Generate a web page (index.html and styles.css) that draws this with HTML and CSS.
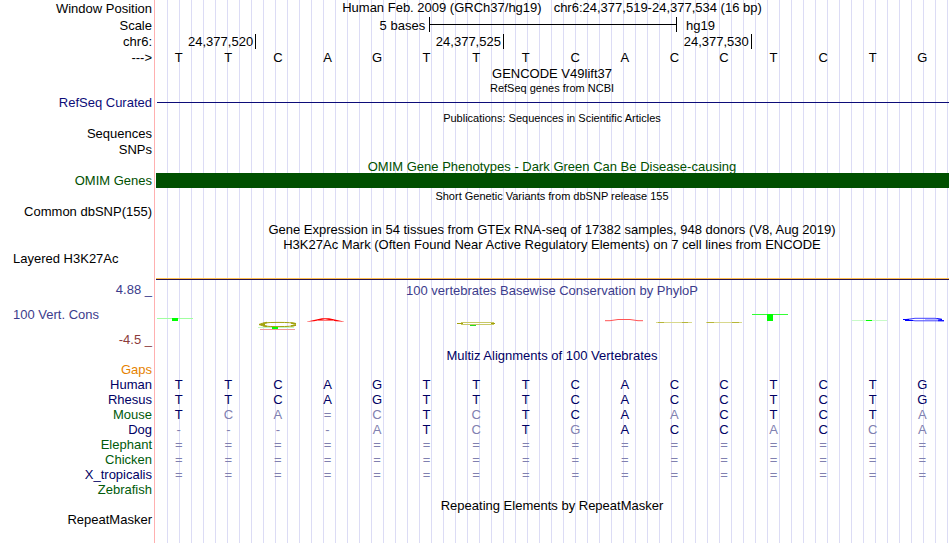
FILE: index.html
```
<!DOCTYPE html>
<html lang="en">
<head>
<meta charset="utf-8">
<title>Human chr6:24,377,519-24,377,534 genome browser</title>
<link rel="stylesheet" href="styles.css">
</head>
<body>
<main class="browser">
  <div class="row tall"><div class="label">Window Position</div><div class="title position"><span>Human Feb. 2009 (GRCh37/hg19)</span><span>chr6:24,377,519-24,377,534 (16 bp)</span></div></div>
  <div class="row tall"><div class="label">Scale</div><div class="scale"><span class="scale-size">5 bases</span><span class="scale-bar"></span><span class="scale-db">hg19</span></div></div>
  <div class="row medium"><div class="label">chr6:</div><div class="ruler"><span class="tick">24,377,520</span><span class="tick">24,377,525</span><span class="tick">24,377,530</span></div></div>
  <div class="row"><div class="label">---&gt;</div><div class="bases"><span>T</span><span>T</span><span>C</span><span>A</span><span>G</span><span>T</span><span>T</span><span>T</span><span>C</span><span>A</span><span>C</span><span>C</span><span>T</span><span>C</span><span>T</span><span>G</span></div></div>
  <div class="row"><div class="title">GENCODE V49lift37</div></div>
  <div class="row"><div class="title small">RefSeq genes from NCBI</div></div>
  <div class="row refseq"><div class="label">RefSeq Curated</div><div class="gene-line"></div></div>
  <div class="row medium"><div class="title small">Publications: Sequences in Scientific Articles</div></div>
  <div class="row"><div class="label">Sequences</div></div>
  <div class="row tall"><div class="label">SNPs</div></div>
  <div class="row green"><div class="title">OMIM Gene Phenotypes - Dark Green Can Be Disease-causing</div></div>
  <div class="row green"><div class="label">OMIM Genes</div><div class="gene-bar"></div></div>
  <div class="row medium"><div class="title small">Short Genetic Variants from dbSNP release 155</div></div>
  <div class="row"><div class="label">Common dbSNP(155)</div></div>
  <div class="row after-gap"><div class="title">Gene Expression in 54 tissues from GTEx RNA-seq of 17382 samples, 948 donors (V8, Aug 2019)</div></div>
  <div class="row"><div class="title">H3K27Ac Mark (Often Found Near Active Regulatory Elements) on 7 cell lines from ENCODE</div></div>
  <div class="row signal"><div class="label left">Layered H3K27Ac</div><div class="signal-line"></div></div>
  <div class="row slate"><div class="label">4.88 _</div><div class="title">100 vertebrates Basewise Conservation by PhyloP</div></div>
  <div class="row slate conservation">
    <div class="label range"><span class="range-name">100 Vert. Cons</span><span class="brown">-4.5 _</span></div>
    <svg class="logo" viewBox="154 297 796 50" preserveAspectRatio="none" aria-hidden="true">
      <path d="M157 318h36v1h-36z" fill="#a0ffa0"/><path d="M172 318h6v3h-6z" fill="#0f0"/>
      <g fill="none" stroke="#a2a20c">
        <path d="M296 323.5Q292 322.4 278 322.4Q260 322.4 260 324.5Q260 326.6 278 326.6Q292 326.6 296 325.3"/>
        <path d="M259 324.5h6M263 323.5l4-1M263 325.5l4 1M291 323l5 1M291 326l5-1" stroke-width="1.5"/>
      </g>
      <path d="M258 327h36v1h-36z" fill="#c4f6c4"/><path d="M272 327h6v2h-6z" fill="#0f0"/><path d="M260 329h35v1h-35z" fill="#e99"/>
      <path d="M306 321.7L322 318.2h7L345 321.7L336 321.2L325 319.2L314 321.3z" fill="red"/><path d="M317 320.5h17" stroke="#f77"/>
      <path d="M461 322h33v1h-33zM461 324h33v1h-33z" fill="#c8c866"/><path d="M457 323h6v1h-6zM491 323h4v1h-4z" fill="#a2a20c"/><path d="M470 325h6v1h-6z" fill="#2d2"/>
      <path d="M605 320.7h5l8-1.2h12l8 1.2h5" fill="none" stroke="#f55"/>
      <path d="M656 322h36v1h-36zM706 322h36v1h-36z" fill="#d8d88c"/><path d="M658 322h6v1h-6zM682 322h6v1h-6zM707 322h7v1h-7zM732 322h7v1h-7z" fill="#b6b638"/>
      <path d="M752 314h36v1h-36z" fill="#3f3"/><path d="M767 314h6v7h-6z" fill="#0f0"/>
      <path d="M852 320h35v1h-35z" fill="#c8fac8"/><path d="M866 320h6v1h-6z" fill="#0f0"/>
      <g fill="none" stroke="#44f"><path d="M942 319.2l-7-.9h-20l-9 1.2l9 1.3h29"/><path d="M903 319.5h6M905 320.5h8M937 318.8l5 .8M938 320.7h6" stroke="#00f"/><path d="M925 319.5h13" stroke="#bbf"/></g>
    </svg>
  </div>
  <div class="row navy"><div class="title">Multiz Alignments of 100 Vertebrates</div></div>
  <div class="row orange"><div class="label">Gaps</div></div>
  <table class="alignment">
    <colgroup><col class="species"><col span="16"></colgroup>
    <tbody>
    <tr><th scope="row">Human</th><td>T</td><td>T</td><td>C</td><td>A</td><td>G</td><td>T</td><td>T</td><td>T</td><td>C</td><td>A</td><td>C</td><td>C</td><td>T</td><td>C</td><td>T</td><td>G</td></tr>
    <tr><th scope="row">Rhesus</th><td>T</td><td>T</td><td>C</td><td>A</td><td>G</td><td>T</td><td>T</td><td>T</td><td>C</td><td>A</td><td>C</td><td>C</td><td>T</td><td>C</td><td>T</td><td>G</td></tr>
    <tr><th scope="row" class="distant">Mouse</th><td>T</td><td class="diff">C</td><td class="diff">A</td><td class="diff">=</td><td class="diff">C</td><td>T</td><td class="diff">C</td><td>T</td><td>C</td><td>A</td><td class="diff">A</td><td>C</td><td>T</td><td>C</td><td>T</td><td class="diff">A</td></tr>
    <tr><th scope="row">Dog</th><td class="diff">-</td><td class="diff">-</td><td class="diff">-</td><td class="diff">-</td><td class="diff">A</td><td>T</td><td class="diff">C</td><td>T</td><td class="diff">G</td><td>A</td><td>C</td><td>C</td><td class="diff">A</td><td>C</td><td class="diff">C</td><td class="diff">A</td></tr>
    <tr class="unaligned"><th scope="row" class="distant">Elephant</th><td>=</td><td>=</td><td>=</td><td>=</td><td>=</td><td>=</td><td>=</td><td>=</td><td>=</td><td>=</td><td>=</td><td>=</td><td>=</td><td>=</td><td>=</td><td>=</td></tr>
    <tr class="unaligned"><th scope="row" class="distant">Chicken</th><td>=</td><td>=</td><td>=</td><td>=</td><td>=</td><td>=</td><td>=</td><td>=</td><td>=</td><td>=</td><td>=</td><td>=</td><td>=</td><td>=</td><td>=</td><td>=</td></tr>
    <tr class="unaligned"><th scope="row">X_tropicalis</th><td>=</td><td>=</td><td>=</td><td>=</td><td>=</td><td>=</td><td>=</td><td>=</td><td>=</td><td>=</td><td>=</td><td>=</td><td>=</td><td>=</td><td>=</td><td>=</td></tr>
    <tr><th scope="row" class="distant">Zebrafish</th><td colspan="16"></td></tr>
    </tbody>
  </table>
  <div class="row"><div class="title">Repeating Elements by RepeatMasker</div></div>
  <div class="row"><div class="label">RepeatMasker</div></div>
</main>
</body>
</html>
```
FILE: styles.css
```
:root {
  --label-width: 154px;
  --navy: #000064;
  --green: #005000;
}

* {
  box-sizing: border-box;
}

body {
  margin: 0;
  background: #fff;
  color: #000;
  font: 13px/15px "Liberation Sans", Arial, sans-serif;
}

/* Label gutter, its red divider and the vertical guidelines */
.browser {
  min-height: 100vh;
  background:
    linear-gradient(to right, #fff 154px, #ffb0b0 154px, #ffb0b0 155px, #fff 155px, #fff 158px, transparent 158px),
    linear-gradient(to right, #dcdcf5 1px, transparent 1px) 11px 0 / 12px 100%;
}

.row {
  display: grid;
  grid-template-columns: var(--label-width) minmax(0, 1fr);
  grid-template-rows: 15px;
  white-space: nowrap;
}

.medium { grid-template-rows: 16px; line-height: 16px; }
.tall { grid-template-rows: 17px; line-height: 17px; }
.after-gap { margin-top: 2px; }

.label {
  padding-right: 2px;
  text-align: right;
}

.label.left {
  padding-left: 13px;
  text-align: left;
}

.title {
  grid-column: 2;
  line-height: 17px;
  text-align: center;
}

.small { font-size: 11px; }

.position {
  display: flex;
  justify-content: center;
  gap: 12px;
  line-height: 15px;
}

.navy { color: var(--navy); }
.refseq { color: #0c0c78; }
.green { color: var(--green); }
.slate { color: #3c3c8c; }
.brown { color: #8c3c3c; }
.orange { color: #e68200; }
.distant { color: #005a0a; }

.scale {
  display: flex;
  padding-right: 3px;
}

.scale-size {
  width: 34.7%;
  padding-right: 4px;
  text-align: right;
}

.scale-bar {
  width: 31.25%;
  height: 15px;
  border: solid #000;
  border-width: 0 1px;
  background: linear-gradient(#000, #000) 0 50% / 100% 1px no-repeat;
}

.scale-db { padding-left: 9px; }

.ruler {
  display: grid;
  grid-template-columns: 2fr 5fr 5fr 4fr;
  padding-left: 3px;
}

.tick {
  height: 15px;
  padding-right: 2px;
  border-right: 1px solid #000;
  text-align: right;
}

.bases {
  display: grid;
  grid-template-columns: repeat(16, 1fr);
  padding-right: 3px;
  text-align: center;
}

.gene-line {
  align-self: center;
  height: 1px;
  margin: 0 1px 0 3px;
  background: #0c0c78;
}

.gene-bar {
  margin: 0 1px 0 2px;
  background: var(--green);
}

.signal { grid-template-rows: 31px; }

.signal-line {
  align-self: end;
  height: 2px;
  margin: 0 1px 2px 2px;
  background: linear-gradient(#ffc050 50%, #281450 50%);
}

.conservation { grid-template-rows: 50px; }

.range {
  display: flex;
  flex-direction: column;
  justify-content: space-between;
  padding-top: 10px;
}

.range-name {
  padding-left: 13px;
  text-align: left;
}

.logo {
  display: block;
  width: 100%;
  height: 50px;
}

.alignment {
  width: 100%;
  padding-right: 3px;
  table-layout: fixed;
  border-spacing: 0;
  color: var(--navy);
}

.species { width: var(--label-width); }

.alignment th,
.alignment td {
  height: 15px;
  padding: 0;
  text-align: center;
  font-weight: normal;
}

.alignment th {
  padding-right: 2px;
  text-align: right;
}

.diff,
.unaligned td {
  color: #8080b0;
}
```
